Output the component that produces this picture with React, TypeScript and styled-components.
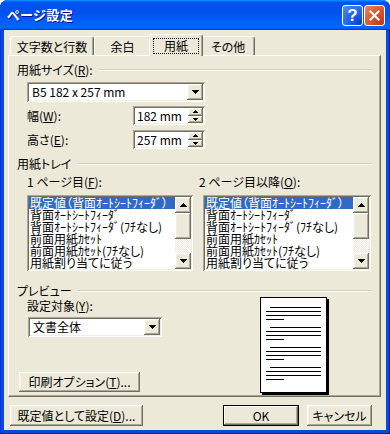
import React from "react";
import styled, { createGlobalStyle, css } from "styled-components";

const FACE = "#ECE9D8";
const LIGHT = "#F1EFE2";
const SHADOW = "#ACA899";
const DARK = "#716F64";
const FONT = `"Noto Sans CJK JP", "Noto Sans", sans-serif`;

const GlobalStyle = createGlobalStyle`
  html, body { margin: 0; padding: 0; }
  body { background: #ffffff; width: 390px; height: 434px; overflow: hidden; }
  * { box-sizing: border-box; }
  u { text-decoration: underline; text-underline-offset: 1px; }
`;

const raised = css`
  background: ${FACE};
  box-shadow: inset -1px -1px ${DARK}, inset 1px 1px #fff, inset -2px -2px ${SHADOW}, inset 2px 2px ${LIGHT};
`;

const sunken = css`
  background: #fff;
  box-shadow: inset 1px 1px ${SHADOW}, inset -1px -1px #fff, inset 2px 2px ${DARK}, inset -2px -2px ${LIGHT};
`;

const Window = styled.div`
  width: 390px;
  height: 434px;
  display: flex;
  flex-direction: column;
  background: #0b48dc;
  box-shadow: inset -1px -1px #001ea0, inset 1px 0 #0831d9;
  border-radius: 8px 8px 0 0;
  overflow: hidden;
  font-family: ${FONT};
  font-size: 12px;
  font-feature-settings: "palt";
  color: #000;
`;

const TitleBar = styled.div`
  height: 30px;
  flex: none;
  display: flex;
  align-items: center;
  justify-content: space-between;
  padding: 0 5px 0 7px;
  background: linear-gradient(180deg, #0997ff 0, #0053ee 8%, #0050ee 40%, #06f 88%, #06f 93%, #005bff 95%, #003dd7 96%, #003dd7 100%);
`;

const TitleText = styled.div`
  color: #fff;
  font-weight: 700;
  font-size: 13px;
  line-height: 16px;
  text-shadow: 1px 1px #0f1089;
  letter-spacing: 0.5px;
`;

const CaptionButtons = styled.div`
  display: flex;
  gap: 1px;
  margin-top: 1px;
`;

const CaptionButton = styled.div<{ $variant: "help" | "close" }>`
  width: 21px;
  height: 21px;
  border: 1px solid #fff;
  border-radius: 3px;
  display: flex;
  align-items: center;
  justify-content: center;
  color: #fff;
  font-family: "Liberation Sans", Arial, sans-serif;
  font-weight: 700;
  font-size: 17px;
  line-height: 1;
  ${(p) =>
    p.$variant === "help"
      ? css`
          background: radial-gradient(circle at 90% 90%, #0a3fd0 0, #2a66f0 55%, #5a8ff8 100%);
        `
      : css`
          background: radial-gradient(circle at 90% 90%, #c0391b 0, #e0562d 55%, #f08a60 100%);
        `}
`;

const Client = styled.div`
  flex: 1;
  margin: 0 4px 4px;
  background: ${FACE};
  display: flex;
  flex-direction: column;
  padding: 4px 5px 0 4px;
`;

const TabRow = styled.div`
  height: 21px;
  display: flex;
  align-items: flex-end;
  padding-left: 2px;
  position: relative;
  z-index: 2;
`;

const Tab = styled.div<{ $w: number; $active?: boolean }>`
  width: ${(p) => p.$w + (p.$active ? 4 : 0)}px;
  height: ${(p) => (p.$active ? 22 : 19)}px;
  margin: 0 ${(p) => (p.$active ? -2 : 0)}px ${(p) => (p.$active ? -1 : 0)}px;
  background: ${FACE};
  border-top: 1px solid #fff;
  border-left: 1px solid #fff;
  border-right: 1px solid ${DARK};
  box-shadow: inset -1px 0 ${SHADOW};
  border-radius: 3px 3px 0 0;
  display: flex;
  align-items: ${(p) => (p.$active ? "flex-start" : "center")};
  justify-content: center;
  padding-top: ${(p) => (p.$active ? 3 : 1)}px;
  line-height: 14px;
  position: relative;
  z-index: ${(p) => (p.$active ? 3 : 1)};
`;

const FocusBox = styled.div`
  flex: 1;
  margin: 0 3px;
  height: 16px;
  border: 1px dotted #000;
  display: flex;
  align-items: center;
  justify-content: center;
`;

const Panel = styled.div`
  width: 373px;
  height: 342px;
  flex: none;
  border-top: 1px solid #fff;
  border-left: 1px solid #fff;
  border-right: 1px solid ${DARK};
  border-bottom: 1px solid ${DARK};
  box-shadow: inset -1px -1px ${SHADOW};
  padding: 0 8px;
  display: flex;
  flex-direction: column;
  position: relative;
  z-index: 1;
`;

const GroupHeader = styled.div<{ $mt: number }>`
  display: flex;
  align-items: center;
  gap: 6px;
  height: 12px;
  line-height: 12px;
  margin-top: ${(p) => p.$mt}px;
  white-space: nowrap;
`;

const Rule = styled.div`
  flex: 1;
  height: 2px;
  border-top: 1px solid #d0d0bf;
  border-bottom: 1px solid #fff;
`;

const Combo = styled.div<{ $w: number; $ml: number; $mt: number }>`
  ${sunken};
  width: ${(p) => p.$w}px;
  height: 20px;
  margin: ${(p) => p.$mt}px 0 0 ${(p) => p.$ml}px;
  display: flex;
  align-items: center;
  padding: 2px;
`;

const ComboValue = styled.div`
  flex: 1;
  padding-left: 3px;
  line-height: 14px;
  white-space: nowrap;
`;

const DropButton = styled.div`
  ${raised};
  width: 16px;
  height: 16px;
  display: flex;
  align-items: center;
  justify-content: center;
`;

const FieldRow = styled.div<{ $mt: number }>`
  display: flex;
  align-items: center;
  height: 19px;
  margin: ${(p) => p.$mt}px 0 0 10px;
`;

const FieldLabel = styled.div`
  width: 106px;
  line-height: 14px;
`;

const Spin = styled.div`
  ${sunken};
  width: 72px;
  height: 19px;
  display: flex;
  align-items: center;
  padding: 2px;
`;

const SpinValue = styled.div`
  flex: 1;
  padding-left: 2px;
  line-height: 14px;
`;

const SpinButtons = styled.div`
  width: 15px;
  height: 15px;
  display: flex;
  flex-direction: column;
`;

const SpinHalf = styled.div`
  ${raised};
  flex: 1;
  display: flex;
  align-items: center;
  justify-content: center;
`;

const TrayGrid = styled.div`
  display: grid;
  grid-template-columns: 172px 1fr;
  margin: 5px 0 0 10px;
`;

const TrayLabel = styled.div`
  height: 14px;
  line-height: 14px;
  white-space: nowrap;
`;

const ListBox = styled.div<{ $w: number; $ml: number }>`
  ${sunken};
  width: ${(p) => p.$w}px;
  height: 76px;
  margin: 6px 0 0 ${(p) => p.$ml}px;
  padding: 2px;
  display: flex;
`;

const ListItems = styled.div`
  flex: 1;
  min-width: 0;
  overflow-x: clip;
  overflow-y: visible;
`;

const ListItem = styled.div<{ $selected?: boolean }>`
  height: 12px;
  line-height: 12px;
  white-space: nowrap;
  padding-left: 1px;
  font-size: 12px;
  background: ${(p) => (p.$selected ? "#316AC5" : "transparent")};
  color: ${(p) => (p.$selected ? "#fff" : "#000")};
`;

const ScrollBar = styled.div`
  width: 16px;
  flex: none;
  display: flex;
  flex-direction: column;
`;

const ScrollArrow = styled.div`
  ${raised};
  height: 16px;
  flex: none;
  display: flex;
  align-items: center;
  justify-content: center;
`;

const ScrollThumb = styled.div`
  ${raised};
  height: 26px;
  flex: none;
`;

const ScrollTrack = styled.div`
  flex: 1;
  background-color: #fff;
  background-image: repeating-conic-gradient(${FACE} 0% 25%, #fff 0% 50%);
  background-size: 2px 2px;
`;

const PreviewRow = styled.div`
  display: flex;
`;

const PreviewLeft = styled.div`
  width: 243px;
  display: flex;
  flex-direction: column;
  align-items: flex-start;
`;

const PlainLabel = styled.div<{ $mt: number; $ml: number }>`
  line-height: 14px;
  margin: ${(p) => p.$mt}px 0 0 ${(p) => p.$ml}px;
  white-space: nowrap;
`;

const PushButton = styled.div<{ $w: number; $default?: boolean }>`
  width: ${(p) => p.$w}px;
  height: 21px;
  display: flex;
  align-items: center;
  justify-content: center;
  line-height: 14px;
  white-space: nowrap;
  background: ${FACE};
  ${(p) =>
    p.$default
      ? css`
          border: 1px solid #000;
          box-shadow: inset -1px -1px ${DARK}, inset 1px 1px #fff, inset -2px -2px ${SHADOW};
        `
      : css`
          box-shadow: inset -1px -1px ${DARK}, inset 1px 1px #fff, inset -2px -2px ${SHADOW}, inset 2px 2px ${LIGHT};
        `}
`;

const PrintOptionButton = styled(PushButton)`
  height: 20px;
  margin: 35px 0 0 2px;
`;

const PagePreview = styled.div`
  width: 67px;
  height: 96px;
  border: 1px solid #000;
  background: #fff;
  box-shadow: 2px 2px 0 #000;
`;

const ButtonRow = styled.div`
  display: flex;
  align-items: center;
  margin-top: 8px;
  padding: 0 9px 0 2px;
`;

const Spacer = styled.div`
  flex: 1;
`;

const ButtonGap = styled.div`
  width: 8px;
`;

function DownArrow() {
  return (
    <svg width="7" height="4" viewBox="0 0 7 4" shapeRendering="crispEdges">
      <path d="M0 0h7v1h-1v1h-1v1h-1v1h-1v-1h-1v-1h-1v-1h-1z" fill="#000" />
    </svg>
  );
}

function UpArrow() {
  return (
    <svg width="7" height="4" viewBox="0 0 7 4" shapeRendering="crispEdges">
      <path d="M0 4h7v-1h-1v-1h-1v-1h-1v-1h-1v1h-1v1h-1v1h-1z" fill="#000" />
    </svg>
  );
}

function TinyArrow({ up }: { up?: boolean }) {
  return (
    <svg width="5" height="3" viewBox="0 0 5 3" shapeRendering="crispEdges">
      {up ? (
        <path d="M0 3h5v-1h-1v-1h-1v-1h-1v1h-1v1h-1z" fill="#000" />
      ) : (
        <path d="M0 0h5v1h-1v1h-1v1h-1v-1h-1v-1h-1z" fill="#000" />
      )}
    </svg>
  );
}

const trayItems = [
  "既定値（背面ｵｰﾄｼｰﾄﾌｨｰﾀﾞ）",
  "背面ｵｰﾄｼｰﾄﾌｨｰﾀﾞ",
  "背面ｵｰﾄｼｰﾄﾌｨｰﾀﾞ(ﾌﾁなし)",
  "前面用紙ｶｾｯﾄ",
  "前面用紙ｶｾｯﾄ(ﾌﾁなし)",
  "用紙割り当てに従う",
];

function TrayList({ w, ml }: { w: number; ml: number }) {
  return (
    <ListBox $w={w} $ml={ml}>
      <ListItems>
        {trayItems.map((t, i) => (
          <ListItem key={t} $selected={i === 0}>
            {t}
          </ListItem>
        ))}
      </ListItems>
      <ScrollBar>
        <ScrollArrow>
          <UpArrow />
        </ScrollArrow>
        <ScrollThumb />
        <ScrollTrack />
        <ScrollArrow>
          <DownArrow />
        </ScrollArrow>
      </ScrollBar>
    </ListBox>
  );
}

function PageLines() {
  const paras = [0, 20, 40, 60];
  return (
    <svg width="65" height="94" viewBox="0 0 65 94" shapeRendering="crispEdges" style={{ display: "block" }}>
      {paras.map((y0) => (
        <g key={y0} stroke="#000" strokeWidth="1">
          <line x1="9" x2="60" y1={y0 + 9.5} y2={y0 + 9.5} />
          <line x1="5" x2="60" y1={y0 + 13.5} y2={y0 + 13.5} />
          <line x1="5" x2="60" y1={y0 + 17.5} y2={y0 + 17.5} />
          <line x1="5" x2="23" y1={y0 + 21.5} y2={y0 + 21.5} />
        </g>
      ))}
    </svg>
  );
}

const tabs = [
  { label: "文字数と行数", w: 84 },
  { label: "余白", w: 57 },
  { label: "用紙", w: 50, active: true },
  { label: "その他", w: 54 },
];

export default function App() {
  return (
    <>
      <GlobalStyle />
      <Window>
        <TitleBar>
          <TitleText>ページ設定</TitleText>
          <CaptionButtons>
            <CaptionButton $variant="help">?</CaptionButton>
            <CaptionButton $variant="close">
              <svg width="11" height="11" viewBox="0 0 11 11">
                <path d="M1.5 1.5L9.5 9.5M9.5 1.5L1.5 9.5" stroke="#fff" strokeWidth="2.2" strokeLinecap="square" />
              </svg>
            </CaptionButton>
          </CaptionButtons>
        </TitleBar>
        <Client>
          <TabRow>
            {tabs.map((t) => (
              <Tab key={t.label} $w={t.w} $active={t.active}>
                {t.active ? <FocusBox>{t.label}</FocusBox> : t.label}
              </Tab>
            ))}
          </TabRow>
          <Panel>
            <GroupHeader $mt={8}>
              <span>
                用紙サイズ(<u>R</u>):
              </span>
              <Rule />
            </GroupHeader>
            <Combo $w={178} $ml={10} $mt={6}>
              <ComboValue>B5 182 x 257 mm</ComboValue>
              <DropButton>
                <DownArrow />
              </DropButton>
            </Combo>
            <FieldRow $mt={4}>
              <FieldLabel>
                幅(<u>W</u>):
              </FieldLabel>
              <Spin>
                <SpinValue>182 mm</SpinValue>
                <SpinButtons>
                  <SpinHalf>
                    <TinyArrow up />
                  </SpinHalf>
                  <SpinHalf>
                    <TinyArrow />
                  </SpinHalf>
                </SpinButtons>
              </Spin>
            </FieldRow>
            <FieldRow $mt={5}>
              <FieldLabel>
                高さ(<u>E</u>):
              </FieldLabel>
              <Spin>
                <SpinValue>257 mm</SpinValue>
                <SpinButtons>
                  <SpinHalf>
                    <TinyArrow up />
                  </SpinHalf>
                  <SpinHalf>
                    <TinyArrow />
                  </SpinHalf>
                </SpinButtons>
              </Spin>
            </FieldRow>
            <GroupHeader $mt={9}>
              <span>用紙トレイ</span>
              <Rule />
            </GroupHeader>
            <TrayGrid>
              <TrayLabel>
                1 ページ目(<u>F</u>):
              </TrayLabel>
              <TrayLabel>
                2 ページ目以降(<u>O</u>):
              </TrayLabel>
              <TrayList w={166} ml={0} />
              <TrayList w={168} ml={4} />
            </TrayGrid>
            <GroupHeader $mt={14}>
              <span>プレビュー</span>
              <Rule />
            </GroupHeader>
            <PreviewRow>
              <PreviewLeft>
                <PlainLabel $mt={2} $ml={10}>
                  設定対象(<u>Y</u>):
                </PlainLabel>
                <Combo $w={134} $ml={11} $mt={4}>
                  <ComboValue>文書全体</ComboValue>
                  <DropButton>
                    <DownArrow />
                  </DropButton>
                </Combo>
                <PrintOptionButton $w={121}>
                  印刷オプション(<u>T</u>)...
                </PrintOptionButton>
              </PreviewLeft>
              <PagePreview>
                <PageLines />
              </PagePreview>
            </PreviewRow>
          </Panel>
          <ButtonRow>
            <PushButton $w={133}>
              既定値として設定(<u>D</u>)...
            </PushButton>
            <Spacer />
            <PushButton $w={76} $default>
              OK
            </PushButton>
            <ButtonGap />
            <PushButton $w={65}>キャンセル</PushButton>
          </ButtonRow>
        </Client>
      </Window>
    </>
  );
}
